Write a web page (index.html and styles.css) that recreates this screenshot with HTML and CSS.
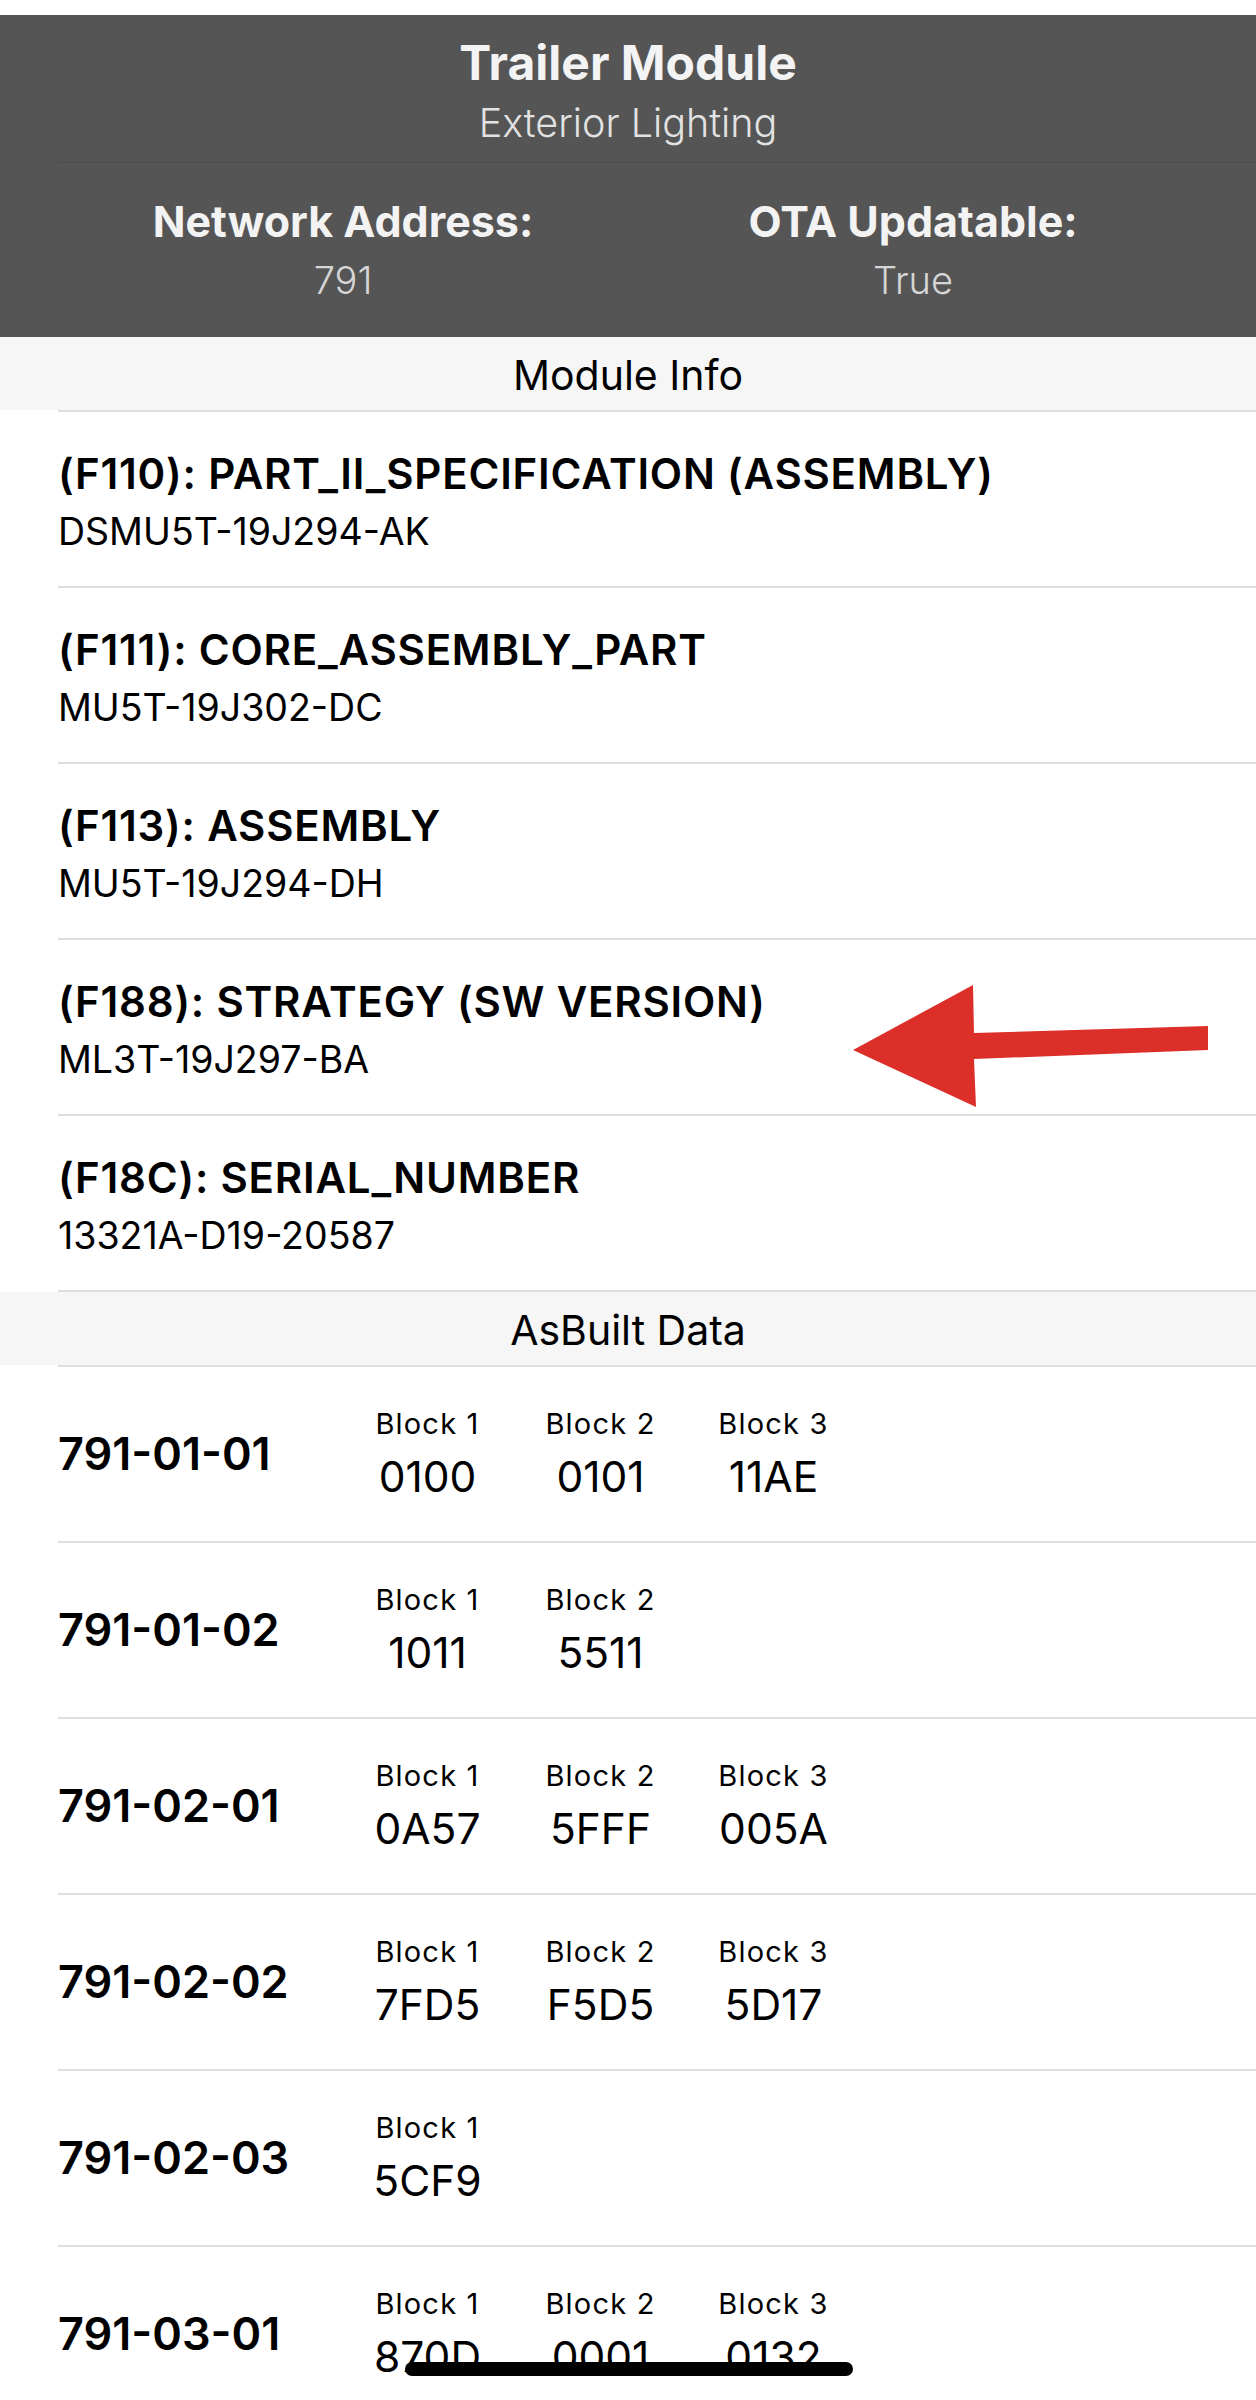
FILE: index.html
```html
<!DOCTYPE html>
<html lang="en">
<head>
<meta charset="utf-8">
<title>Trailer Module</title>
<link rel="stylesheet" href="styles.css">
</head>
<body>
<div class="screen">
  <div class="statusbar"></div>
  <header class="hdr">
    <div class="hdr-title">Trailer Module</div>
    <div class="hdr-sub">Exterior Lighting</div>
    <div class="hdr-divider"></div>
    <div class="hdr-cols">
      <div class="hdr-col">
        <div class="hdr-label">Network Address:</div>
        <div class="hdr-value">791</div>
      </div>
      <div class="hdr-col">
        <div class="hdr-label">OTA Updatable:</div>
        <div class="hdr-value">True</div>
      </div>
    </div>
  </header>

  <div class="section-title">Module Info</div>
  <div class="list">
    <div class="info-row">
      <div class="info-title">(F110): PART_II_SPECIFICATION (ASSEMBLY)</div>
      <div class="info-value">DSMU5T-19J294-AK</div>
    </div>
    <div class="info-row">
      <div class="info-title">(F111): CORE_ASSEMBLY_PART</div>
      <div class="info-value">MU5T-19J302-DC</div>
    </div>
    <div class="info-row">
      <div class="info-title">(F113): ASSEMBLY</div>
      <div class="info-value">MU5T-19J294-DH</div>
    </div>
    <div class="info-row info-row--marked">
      <div class="info-title">(F188): STRATEGY (SW VERSION)</div>
      <div class="info-value">ML3T-19J297-BA</div>
      <svg class="arrow" width="356" height="123" viewBox="0 0 356 123" aria-hidden="true">
        <polygon points="0,65 120,0 121,48 355,41 355,65 121,74 123,122" fill="#dc2f2a"/>
      </svg>
    </div>
    <div class="info-row">
      <div class="info-title">(F18C): SERIAL_NUMBER</div>
      <div class="info-value">13321A-D19-20587</div>
    </div>
  </div>

  <div class="section-title">AsBuilt Data</div>
  <div class="list list--open">
    <div class="ab-row">
      <div class="ab-id">791-01-01</div>
      <div class="ab-block"><div class="ab-blabel">Block 1</div><div class="ab-bvalue">0100</div></div>
      <div class="ab-block"><div class="ab-blabel">Block 2</div><div class="ab-bvalue">0101</div></div>
      <div class="ab-block"><div class="ab-blabel">Block 3</div><div class="ab-bvalue">11AE</div></div>
    </div>
    <div class="ab-row">
      <div class="ab-id">791-01-02</div>
      <div class="ab-block"><div class="ab-blabel">Block 1</div><div class="ab-bvalue">1011</div></div>
      <div class="ab-block"><div class="ab-blabel">Block 2</div><div class="ab-bvalue">5511</div></div>
    </div>
    <div class="ab-row">
      <div class="ab-id">791-02-01</div>
      <div class="ab-block"><div class="ab-blabel">Block 1</div><div class="ab-bvalue">0A57</div></div>
      <div class="ab-block"><div class="ab-blabel">Block 2</div><div class="ab-bvalue">5FFF</div></div>
      <div class="ab-block"><div class="ab-blabel">Block 3</div><div class="ab-bvalue">005A</div></div>
    </div>
    <div class="ab-row">
      <div class="ab-id">791-02-02</div>
      <div class="ab-block"><div class="ab-blabel">Block 1</div><div class="ab-bvalue">7FD5</div></div>
      <div class="ab-block"><div class="ab-blabel">Block 2</div><div class="ab-bvalue">F5D5</div></div>
      <div class="ab-block"><div class="ab-blabel">Block 3</div><div class="ab-bvalue">5D17</div></div>
    </div>
    <div class="ab-row">
      <div class="ab-id">791-02-03</div>
      <div class="ab-block"><div class="ab-blabel">Block 1</div><div class="ab-bvalue">5CF9</div></div>
    </div>
    <div class="ab-row">
      <div class="ab-id">791-03-01</div>
      <div class="ab-block"><div class="ab-blabel">Block 1</div><div class="ab-bvalue">870D</div></div>
      <div class="ab-block"><div class="ab-blabel">Block 2</div><div class="ab-bvalue">0001</div></div>
      <div class="ab-block"><div class="ab-blabel">Block 3</div><div class="ab-bvalue">0132</div></div>
    </div>
  </div>

  <div class="home-indicator"></div>
</div>
</body>
</html>
```

FILE: styles.css
```css
html, body {
  margin: 0;
  padding: 0;
  background: #ffffff;
}

body {
  font-family: Inter, "Noto Sans", "Liberation Sans", sans-serif;
  color: #000;
  overflow: hidden;
}

.screen {
  position: relative;
  width: 1256px;
  height: 2400px;
  overflow: hidden;
  background: #fff;
}

.statusbar {
  height: 15px;
  background: #fff;
}

/* ---------- dark header ---------- */
.hdr {
  background: #555555;
  padding: 19px 0 34px;
  text-align: center;
}

.hdr-title {
  font-size: 48px;
  line-height: 58px;
  font-weight: 700;
  color: #f3f3f3;
}

.hdr-sub {
  margin-top: 8px;
  font-size: 39.5px;
  line-height: 47px;
  font-weight: 300;
  color: #e2e2e2;
}

.hdr-divider {
  margin: 15px 0 0 58px;
  height: 1px;
  background: #4c4c4c;
}

.hdr-cols {
  display: grid;
  grid-template-columns: 1fr 1fr;
  padding: 0 58px;
  margin-top: 33px;
}

.hdr-label {
  font-size: 43px;
  line-height: 51px;
  font-weight: 700;
  color: #f3f3f3;
}

.hdr-value {
  margin-top: 11px;
  font-size: 38px;
  line-height: 45px;
  font-weight: 300;
  color: #d6d6d6;
}

/* ---------- section headers ---------- */
.section-title {
  height: 73px;
  box-sizing: border-box;
  padding-top: 4px;
  background: #f6f6f6;
  text-align: center;
  font-size: 41px;
  line-height: 69px;
  font-weight: 400;
  color: #000;
}

/* ---------- lists ---------- */
.list {
  margin-left: 58px;
  border-bottom: 2px solid #dedede;
}

.list--open {
  border-bottom: none;
}

.info-row {
  position: relative;
  height: 176px;
  box-sizing: border-box;
  border-top: 2px solid #dedede;
  padding-top: 37px;
}

.info-title {
  font-size: 42px;
  line-height: 50px;
  font-weight: 600;
  letter-spacing: 0.8px;
  color: #000;
}

.info-value {
  margin-top: 11px;
  font-size: 37.5px;
  line-height: 44px;
  font-weight: 400;
  color: #000;
}

.arrow {
  position: absolute;
  left: 795px;
  top: 45px;
}

/* ---------- as-built rows ---------- */
.ab-row {
  display: flex;
  align-items: center;
  height: 176px;
  box-sizing: border-box;
  border-top: 2px solid #dedede;
}

.ab-id {
  width: 283px;
  flex: none;
  font-size: 45px;
  line-height: 54px;
  font-weight: 600;
  color: #000;
}

.ab-block {
  width: 173px;
  flex: none;
  text-align: center;
}

.ab-blabel {
  font-size: 29px;
  line-height: 34px;
  font-weight: 400;
  letter-spacing: 1.2px;
  color: #000;
}

.ab-bvalue {
  margin-top: 11px;
  font-size: 42.5px;
  line-height: 50px;
  font-weight: 400;
  color: #000;
}

/* ---------- overlay ---------- */
.home-indicator {
  position: absolute;
  left: 405px;
  bottom: 24px;
  width: 448px;
  height: 14px;
  border-radius: 7px;
  background: #000;
}
```
